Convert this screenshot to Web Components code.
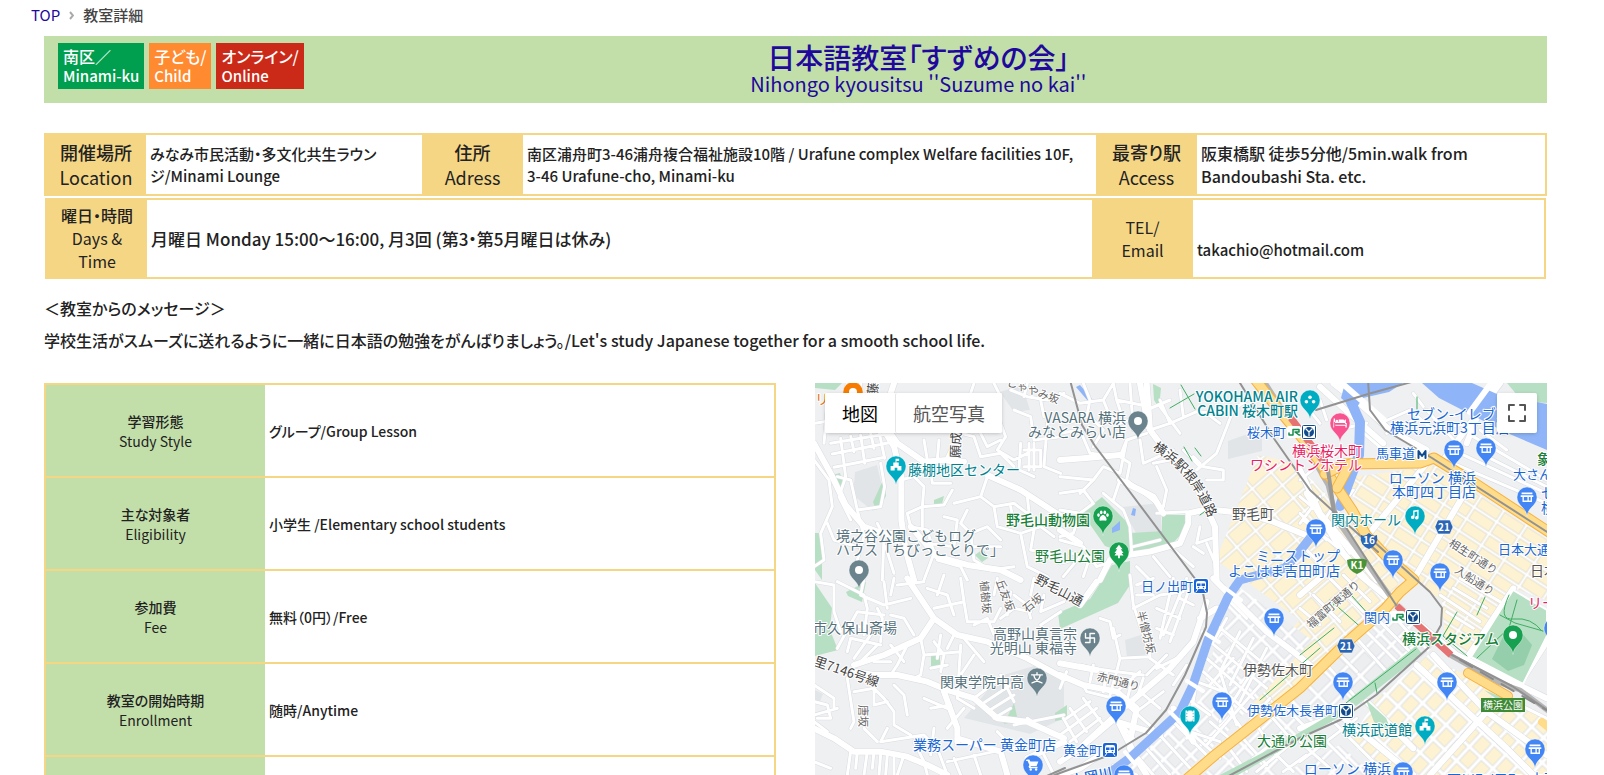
<!DOCTYPE html>
<html lang="ja">
<head>
<meta charset="utf-8">
<meta name="viewport" content="width=device-width, initial-scale=1">
<title>教室詳細</title>
<style>
  body { margin: 0; background: #fff; color: #222; font: 500 16px/22px "Noto Sans CJK JP", sans-serif; font-feature-settings: "palt"; }
</style>
</head>
<body>
<class-page></class-page>
<script>
const define = (name, html, setup) => customElements.define(name, class extends HTMLElement {
  connectedCallback() {
    if (this.shadowRoot) return;
    const t = document.createElement('template');
    t.innerHTML = html;
    this.attachShadow({ mode: 'open' }).append(t.content.cloneNode(true));
    if (setup) setup(this, this.shadowRoot);
  }
});

define('bread-crumb', `
<style>
  :host { display: block; padding: 4px 31px 10px; }
  nav { display: flex; align-items: center; gap: 9px; font-size: 15px; line-height: 22px; color: #444; }
  a { color: #20089c; text-decoration: none; font-weight: 400; }
  svg { width: 5px; height: 9px; fill: none; stroke: #aaa; stroke-width: 2; }
</style>
<nav aria-label="breadcrumb"><a href="#top">TOP</a><svg viewBox="0 0 5 9"><path d="M1 1l3 3.500-3 3.500"/></svg><span>教室詳細</span></nav>`);

define('tag-chip', `
<style>
  :host { display: block; padding: 3px 5px; background: var(--tag); color: #fff; font-size: 16px; line-height: 20px; white-space: nowrap; }
  div + div { font-size: 15px; }
</style>
<div><slot></slot></div><div><slot name="en"></slot></div>`);

define('class-banner', `
<style>
  :host { display: flex; background: #c2dfaa; padding: 7px 14px; align-items: flex-start; }
  .tags { display: flex; gap: 5px; }
  h1 { flex: 1; margin: 0; text-align: center; font-size: 28px; line-height: 28px; font-weight: 500; }
  h1 a { color: #20089c; text-decoration: none; }
  small { display: block; font-size: 20px; line-height: 25px; font-weight: 400; }
</style>
<div class="tags"><slot name="tags"></slot></div>
<h1><a href="#class"><slot></slot><small><slot name="sub"></slot></small></a></h1>`);

const infoStyle = `
  table { width: 100%; border-collapse: collapse; table-layout: fixed; border: 2px solid #f5d685; }
  th { background: #f5d685; font-weight: 500; padding: 0; text-align: center; vertical-align: middle; }
  th span { font-weight: 400; }
  td { padding: 0 4px; vertical-align: middle; font-size: 15px; }`;

define('place-table', `
<style>${infoStyle}
  :host { display: block; }
  tr { height: 61px; }
  th { font-size: 18px; line-height: 25px; }
  .wide { font-size: 16px; line-height: 23px; }
  .k { width: 101px; } .a { width: 276px; } .b { width: 573px; }
</style>
<table><colgroup><col class="k"><col class="a"><col class="k"><col class="b"><col class="k"><col></colgroup>
<tr><th scope="row">開催場所<br><span>Location</span></th><td>みなみ市民活動・多文化共生ラウン<br>ジ/Minami Lounge</td>
<th scope="row">住所<br><span>Adress</span></th><td>南区浦舟町3-46浦舟複合福祉施設10階 / Urafune complex Welfare facilities 10F,<br>3-46 Urafune-cho, Minami-ku</td>
<th scope="row">最寄り駅<br><span>Access</span></th><td class="wide">阪東橋駅 徒歩5分他/5min.walk from<br>Bandoubashi Sta. etc.</td></tr></table>`);

define('time-table', `
<style>${infoStyle}
  :host { display: block; margin: 2px 1px 0; }
  tr { height: 79px; }
  th { font-size: 16px; line-height: 23px; }
  .when { font-size: 17px; }
  .k { width: 101px; } .b { width: 945px; }
</style>
<table><colgroup><col class="k"><col class="b"><col class="k"><col></colgroup>
<tr><th scope="row">曜日・時間<br><span>Days &amp;<br>Time</span></th><td class="when">月曜日 Monday 15:00〜16:00, 月3回 (第3・第5月曜日は休み)</td>
<th scope="row"><span>TEL/<br>Email</span></th><td><br>takachio@hotmail.com</td></tr></table>`);

define('class-message', `
<style>:host { display: block; padding: 13px 0 27px; } p { margin: 0; line-height: 32px; font-size: 16px; } p:first-child { line-height: 22px; padding-bottom: 5px; }</style>
<p>＜教室からのメッセージ＞</p><p><slot></slot></p>`);

define('detail-table', `
<style>
  :host { display: block; }
  table { width: 100%; border-collapse: collapse; table-layout: fixed; border: 2px solid #f5d685; font-size: 14px; line-height: 20px; }
  tr { height: 93px; border-bottom: 2px solid #f5d685; }
  th { background: #c2dfaa; width: 30%; font-weight: 500; padding: 0; }
  th span { font-weight: 400; }
  td { padding: 0 4px; }
</style>
<table>
<tr><th scope="row">学習形態<br><span>Study Style</span></th><td>グループ/Group Lesson</td></tr>
<tr><th scope="row">主な対象者<br><span>Eligibility</span></th><td>小学生 /Elementary school students</td></tr>
<tr><th scope="row">参加費<br><span>Fee</span></th><td>無料（0円）/Free</td></tr>
<tr><th scope="row">教室の開始時期<br><span>Enrollment</span></th><td>随時/Anytime</td></tr>
<tr><th scope="row"></th><td></td></tr>
</table>`);

/* ---- map data. Street tiles: [dx, dy, minor streets, wide streets], three units to a pixel ---- */
const tiles = [
[814, 380,
 `M30 190L40 80M0 130L30 125 90 100M50 190L230 160M55 222L225 188M60 262L212 232M80 175L95 290M110 168L120 215M140 165L152 250M170 160L180 205M195 155L212 235M95 290L75 350 110 420M0 240L45 300 55 380 20 460 30 540 0 560M70 290L110 300 130 390 200 380 212 320 200 250M130 390L150 470 130 540M190 430L210 470 205 600M260 300L300 290 330 320 325 380M325 380L280 400 290 440M325 450L325 380 390 375 415 330M350 270L355 310 410 310M375 180L370 240 420 250M330 180L340 240M440 160L480 170 500 230 560 220 600 260M500 160L520 200 560 180M560 130L575 170 550 210 600 240 640 220M620 190L615 270 660 290M630 210H680V260H630M645 190V270M660 190V270M700 130L690 260 740 280M600 90L650 110 660 180 740 170M590 30L640 50 700 60 750 40M640 10L630 50M680 60L690 110M520 290L500 350 420 370M500 350L540 380 600 370 640 400M460 390L440 430 470 460 520 440 560 480M540 380L550 440 620 460 680 440 720 470M590 380L600 430M640 350L650 440M470 460L480 540 530 570 600 560M480 500L560 500M620 460L640 560 700 590M660 450L650 510 750 530M290 440L340 450 360 520M340 490L420 500 430 420 390 410M360 520L330 600M40 430L60 480 130 500M200 460L260 455M215 500L240 580M370 540L440 560 460 600M100 10L90 40M140 10V40M480 10L470 40M540 10L555 40`,
 `M0 190L55 290 95 375 150 440 230 470M210 150L240 200 262 290 262 420 275 510 300 600M222 150L250 190 330 245 400 240 450 245M400 240L440 160 450 120M520 285L620 330 720 395 750 415M290 440L370 530 460 555 560 570 620 600M240 10L230 40`],
[1060, 380,
 `M0 40L60 70 130 60 160 10M70 10L90 60 80 110 20 130M130 60L150 110 180 130 240 110M0 160L60 150 90 220 180 230 200 180 260 160M90 110L130 150 100 200M200 180L180 280 130 260 100 300 0 290M180 230L210 250 200 300 290 370M160 10L170 60 270 80M170 60L190 120M210 10L220 150M240 20L260 90 330 60M270 150L330 130 410 95 480 100M300 80L360 160M330 130L300 60M360 30L370 110M240 180L250 250 340 210M280 250L330 240M290 260L320 330 310 380 300 400M370 210L420 260M410 270L470 220 520 90 560 60M440 100L480 130M400 230L420 250M430 260L490 270 490 300 440 300M0 340L70 330 100 370 60 400 0 390M100 300L60 340M60 400L40 460 0 470M130 340L190 390 210 440 215 520M180 300L160 360M290 400L380 395M220 500L300 480M0 480L70 500 110 560M30 520L90 530 70 590M110 560L200 530M420 440L410 490 470 470M440 490L470 560M400 500L430 520M230 560L270 600M280 530L330 590M330 500L400 560M0 550L40 540M10 590L60 530`,
 `M260 10L270 150 300 190 360 260 410 320 440 385M240 10L265 140M0 240L70 235 180 225M440 385L465 440 470 600M205 525L270 515 360 490 385 430 385 400 440 388 560 400M560 400L640 425 760 475M120 600L150 540 205 525M0 450L60 490M180 300L280 350 310 400`],
[814, 575,
 `M0 20L60 30 60 110 80 170M70 20L150 60 160 100M150 10L140 60 210 90 290 70M210 20L220 100M240 10L230 60M190 100L205 130 200 200M160 100L150 180M100 230L110 190 200 210M120 250L170 180M140 260L190 210M70 220L130 110 210 120M110 150L160 160M230 120L270 130 300 180M320 190L330 240 320 300 300 310M330 240L440 230M350 280L400 270M360 200L390 240 380 290M380 180L370 250M440 210L430 370M480 240L440 300M450 190L510 260M400 220L420 180M230 210L270 260M280 210L250 270 230 300M180 260L230 260M0 330L60 370 60 400M0 380L40 390 50 430 10 430M0 420L70 400M100 310L120 440 110 460M120 350L180 340 210 370 240 410 240 450 290 480M180 340L180 390 220 380M240 330L270 360 280 420M330 370L400 400M350 400L410 390M200 500L220 460M150 460L190 500M200 500L330 480 370 520M0 440L40 470M20 470L80 500M0 560L50 580M110 530L100 600M130 530L125 580M160 530L150 600M180 530L175 580M200 540L195 600M220 540L215 600M240 550L240 600M270 540L250 600M300 500L330 560 340 600M360 460L350 540M370 520L400 600M400 560L540 530M420 550L440 600M480 540L500 600M250 30L330 20M340 40L400 60 420 120M360 100L450 80 440 10M370 60L390 0M450 80L460 140 540 140 560 100M480 150L520 130 540 180M540 60L550 10M560 130L600 100 650 110M600 60L640 90 650 130M590 50L580 120M660 10L650 60M690 60L680 110 750 80M680 150L740 110M430 370L480 400M480 370L560 310M500 390L590 330M520 410L600 360M540 430L590 400M560 300L600 380M450 400L400 460M640 430L700 470M600 450L750 420M550 470L600 520M690 540L720 600`,
 `M280 10L360 130 430 180 520 200 640 250 750 310M360 130L320 190 210 240 120 270M120 290L180 300 250 300 340 320 400 345 480 370 550 430 640 440 750 490M390 350L430 460 430 500M0 460L60 490 120 530 200 530 280 545 340 570 400 600M430 490L560 530 580 600M640 550L750 500`],
[1060, 575,
 `M210 0L220 90 250 180 270 240M120 130L150 140 160 190 180 180M160 160L180 250 170 290M180 250L270 245M300 60L370 50M340 10L300 190M380 10L310 180M400 10L330 200M290 100L360 130M290 160L340 180M360 70L400 90M220 100L300 60M230 60L280 60M230 30L280 10M100 270L90 320M60 270L100 280 170 290 250 300M140 290L130 350M170 290L150 360M220 300L200 380M250 310L230 370M270 250L340 300M290 280L350 250M20 290L0 340M70 330L80 350 160 370 220 400M20 430L90 380M0 480L110 400M30 500L120 430M30 400L80 470M70 370L130 450M10 430L50 500M90 500L160 440M240 350L300 400M200 390L280 460M180 440L220 490M230 410L310 350M170 350L240 290M160 570L230 600M320 240L260 300M380 270L340 330M410 320L490 350M380 370L450 420M330 430L450 550M290 470L400 590M250 510L330 600M220 530L280 600M390 470L480 500M410 320L380 490M470 150L640 290M450 200L620 340M440 250L580 370M430 290L560 410M480 290L530 450M500 130L460 200M540 170L480 290M580 190L510 330M620 220L540 380M510 80L560 130M450 330L520 250M570 300L480 440M600 330L440 510M630 370L560 450M500 400L560 480M450 440L520 500M400 480L480 550M500 510L560 590M540 480L620 570M590 450L650 540M630 420L700 500M670 390L740 460M530 590L630 510M590 590L700 500M670 590L740 540M620 510L700 590`,
 `M0 300L70 330 170 350 230 400 210 500M110 20L60 90M460 10L520 70 620 170 700 230 750 270M400 200L330 280 190 400 60 520 0 560M440 80L400 200M470 100L420 130M0 265L110 285M170 440L300 480M180 450L215 520M340 400L400 500M210 520L260 600M0 600L60 580 150 520`],
[1300, 380,
 `M60 60L80 120M20 80L60 130M110 150L200 130M180 150L250 210M240 130L330 90 400 150M260 160L340 120M380 90L480 200M340 40L370 80M440 140L520 130M540 150L620 210M460 250L740 370M480 220L740 340M520 170L740 300M560 230L740 320M0 350L60 400 150 520M0 400L80 480M0 300L50 260M160 330L110 400M10 420L110 500M10 500L70 560M60 350L0 430M100 380L20 500`,
 `M100 10L190 80 270 150 380 210M60 20L170 120 250 190M600 10L430 240M540 90L500 190M0 270L60 400 230 600M20 340L130 520 200 600M500 330L340 600M380 250L200 470M590 10L560 60`],
[1300, 575,
 `M0 100L60 150M40 60L120 140M90 10L190 110M130 0L210 80M240 140L340 240M170 190L260 290M200 170L300 270M270 110L350 200M120 240L170 290M80 270L180 380M0 330L40 300M440 110L520 160M420 60L540 140M460 40L560 100M480 10L600 80M0 500L90 580M100 440L220 560M60 480L160 580M170 430L0 560M660 390L740 430`,
 `M0 60L70 0M180 0L290 90 470 240 740 370M640 40L500 250M740 200L650 340M350 270L620 520 700 600M400 240L560 410 740 540M560 410L390 600M0 460L120 420 340 600M200 380L340 520`]
];

const pins = [
 ['teal','museum',896,484],['grey','dot',859,588],['grey','dot',1138,439],['teal','dots',1310,418],['pink','bed',1340,441],
 ['green','paw',1103,534],['green','tree',1119,570],['blue','shop',1454,468],['blue','shop',1486,466],['blue','shop',1527,515],
 ['blue','shop',1316,547],['blue','shop',1393,578],['blue','shop',1440,591],['teal','note',1415,534],['blue','shop',1274,636],
 ['blue','shop',1116,724],['blue','shop',1222,720],['teal','film',1190,734],['grey','manji',1090,656],['grey','school',1037,696],
 ['blue','cart',1033,783],['blue','shop',1343,700],['blue','shop',1447,700],['teal','museum',1425,744],['blue','shop',1535,767],
 ['blue','shop',1403,790],['green','dot',1513,653],['blue','shop',1124,793],['blue','shop',1554,646],['orange','dot',853,410]
];
const glyphs = {
 dot: '<circle r="4"/>',
 shop: '<path d="M-6-5h12v2h-12zM-7-2h14v2h-14zM-5 0h1.500v4h4v-4h1.500v4h2v-4h1.500v5.500h-10.500z"/>',
 museum: '<path d="M-.5-8h4v2.500h-3v1.500h-1zM-3-4h6v3h-6zM-6 0h3v-1h6v1h3v5h-4.500v-3h-3v3h-4.500z"/>',
 dots: '<circle cy="-3" r="2"/><circle cx="-4" cy="2" r="2"/><circle cx="4" cy="2" r="2"/>',
 bed: '<path d="M-7-5h1.500v5h11v-2c0-1-1-2-2-2h-5v3h-5v6h-1zM-5.500 2h12v-2h1v5h-1.500v-2h-11zM5.500-4h1v5h-1z"/><circle cx="-3.500" cy="-2" r="1.500"/>',
 paw: '<ellipse cx="-5" cy="-1" rx="1.500" ry="2"/><ellipse cx="-2" cy="-4" rx="1.500" ry="2"/><ellipse cx="2" cy="-4" rx="1.500" ry="2"/><ellipse cx="5" cy="-1" rx="1.500" ry="2"/><path d="M0-1c2 0 4 3 4 5s-2 1-4 1-4 1-4-1 2-5 4-5z"/>',
 tree: '<path d="M0-8l4 5h-2l3 4h-2l2 3h-4v3h-2v-3h-4l2-3h-2l3-4h-2z"/>',
 note: '<path d="M-2-6l6-1v9a2 2 0 1 1-1.500-2v-5l-3 .5v6a2 2 0 1 1-1.500-2z"/>',
 film: '<path d="M-5-6h2v1h1v-1h4v1h1v-1h2v12h-2v-1h-1v1h-4v-1h-1v1h-2zM-4-3v1h1v-1zM-4 0v1h1v-1zM-4 3v1h1v-1zM3-3v1h1v-1zM3 0v1h1v-1zM3 3v1h1v-1z" fill-rule="evenodd"/>',
 manji: '<path d="M-5-5v5h10v5M0-5v10M0-5h5M-5 5h5" fill="none" stroke="#fff" stroke-width="1.500"/>',
 school: '<path d="M0-6v2M-6-3.500h12M-3.500-3q1 6 9 8.500M3.500-3q-1 6-9 8.500" fill="none" stroke="#fff" stroke-width="1.500"/>',
 cart: '<path d="M-7-6h3l1 2h9l-2 5h-6l-1 1h8v1.500h-9l-1-1.500 1-2-2-4.500h-2z"/><circle cx="-2.500" cy="5" r="1.300"/><circle cx="3.500" cy="5" r="1.300"/>'
};
const pinColor = { teal: '#00acc1', grey: '#6b838d', pink: '#f8538f', green: '#16a04f', blue: '#4285f4', orange: '#f57c00' };

/* [text, x, baseline, colour class, anchor?, rotation?] */
const labels = [
 ['藤棚地区センター',908,475,'t'],['境之谷公園こどもログ',836,541,'s'],['ハウス「ちびっことりで」',836,555,'s'],
 ['VASARA 横浜',1126,423,'s','end'],['みなとみらい店',1126,437,'s','end'],
 ['YOKOHAMA AIR',1298,402,'t m','end'],['CABIN 桜木町駅',1298,416,'t m','end'],
 ['桜木町',1247,437,'b st'],['横浜桜木町',1362,456,'p','end'],['ワシントンホテル',1362,470,'p','end'],
 ['セブン-イレブン',1407,419,'b'],['横浜元浜町3丁目店',1390,433,'b'],['馬車道',1376,458,'b st'],
 ['ローソン 横浜',1476,483,'b','end'],['本町四丁目店',1476,497,'b','end'],['象',1537,464,'g m'],['大さん',1513,479,'b st'],
 ['セ',1541,498,'b'],['横',1541,513,'b'],['関内ホール',1401,525,'t','end'],['日本大通',1498,554,'b st'],['日本',1530,576,'k'],
 ['ミニストップ',1340,561,'b','end'],['よこはま吉田町店',1340,576,'b','end'],['野毛町',1232,519,'k'],
 ['野毛山動物園',1090,525,'g m','end'],['野毛山公園',1105,561,'g','end'],['日ノ出町',1141,591,'b st'],
 ['市久保山斎場',813,633,'s'],['関東学院中高',940,687,'s'],['高野山真言宗',1077,639,'s','end'],['光明山 東福寺',1077,653,'s','end'],
 ['業務スーパー 黄金町店',1056,750,'b','end'],['黄金町',1063,755,'b st'],['伊勢佐木町',1243,675,'k'],['伊勢佐木長者町',1247,715,'b st'],
 ['大通り公園',1257,746,'g'],['横浜武道館',1412,735,'t','end'],['横浜スタジアム',1499,644,'g m','end'],['関内',1364,622,'b st'],
 ['リー',1528,608,'p'],['ローソン 横浜',1391,774,'b','end'],['石川町(元町',1447,785,'b'],['中華',1530,784,'b'],
 ['リ',815,404,'o'],
 ['相生町通り',1448,545,'r','start',33],['入船通り',1454,572,'r','start',33],['福富町東通り',1311,629,'r','start',-41],
 ['野毛山通',1034,582,'r w','start',28],['里7146号線',813,665,'r w','start',19],['赤門通り',1096,680,'r','start',14],
 ['石坂',1027,613,'r','start',-40],['丘友坂',996,581,'r','start',70],['植樹坂',980,581,'r','start',85],['半僧坊坂',1137,612,'r','start',76],
 ['唐坂',859,705,'r','start',90],['願成',960,458,'r w','start',-88],['藤',877,396,'r w','start',-85],['じゃやみ坂',1006,385,'r','start',20],
 ['大岡川',1072,786,'b m','start',-12]
];

const esc = s => s.replace(/&/g, '&amp;');
const streets = () => {
  const g = i => tiles.map(t => `<path transform="translate(${t[0]} ${t[1]}) scale(.3333)" d="${t[i]}"/>`).join('');
  return `<g class="c1">${g(2)}</g><g class="c2">${g(3)}</g><g class="f1">${g(2)}</g><g class="f2">${g(3)}</g>`;
};
const metro = (x, y) => `<g transform="translate(${x} ${y})"><rect x="-8" y="-8" width="16" height="16" rx="2" fill="#fff"/><rect x="-6.500" y="-6.500" width="13" height="13" rx="1" fill="#fff" stroke="#124b8c"/><circle r="5" fill="#124b8c"/><path d="M0 4v-4l-3-3M0 0l3-3" stroke="#fff" stroke-width="1.200" fill="none"/></g>`;
const train = (x, y) => `<g transform="translate(${x} ${y})"><rect x="-8" y="-8" width="16" height="16" rx="3" fill="#fff"/><rect x="-7" y="-7" width="14" height="14" rx="2" fill="#1a66d8"/><path d="M-3-5h6a2 2 0 0 1 2 2v6h-10v-6a2 2 0 0 1 2-2z" fill="#fff"/><path d="M-4-2.500h3.500v2.500h-3.500zM.5-2.500h3.500v2.500h-3.500z" fill="#1a66d8"/><path d="M-3 3l-2 3M3 3l2 3" stroke="#fff"/><circle cx="-2.500" cy="1.500" r=".8" fill="#1a66d8"/><circle cx="2.500" cy="1.500" r=".8" fill="#1a66d8"/></g>`;
const jr = (x, y) => `<g transform="translate(${x} ${y})"><rect x="-7" y="-6" width="14" height="12" rx="2" fill="#fff"/><path d="M-5 1v2h4v-5.500h6v2.500h-4l4 3h1" fill="none" stroke="#178a4e" stroke-width="1.500"/></g>`;
const shield = (x, y, n) => `<path transform="translate(${x} ${y})" d="M-6-7h12l3 7-3 7h-12l-3-7z" fill="#2b65b5" stroke="#fff" stroke-width=".6"/><text class="n" x="${x}" y="${y + 4}">${n}</text>`;

define('street-map', `
<style>
  :host { display: block; position: relative; height: 466px; overflow: hidden; background: #eff0f2; }
  .canvas { display: block; width: 100%; height: 100%; }
  path { stroke-linejoin: round; stroke-linecap: round; }
  .c1, .c2, .f1, .f2 { fill: none; }
  .c1 { stroke: #d9dce1; stroke-width: 12; } .c2 { stroke: #d9dce1; stroke-width: 21; }
  .f1 { stroke: #fff; stroke-width: 9; } .f2 { stroke: #fff; stroke-width: 18; }
  .rail { fill: none; stroke: #929292; stroke-width: 2; }
  .hw1 { fill: none; stroke: #f8b13c; stroke-width: 11; } .hw2 { fill: none; stroke: #fedc8a; stroke-width: 9; }
  .mid { fill: none; stroke: #8a8a8a; stroke-width: 2; }
  text { font-size: 14px; font-weight: 400; paint-order: stroke; stroke: #fff; stroke-width: 2; stroke-linejoin: round; font-feature-settings: normal; }
  .t { fill: #00838f; } .s { fill: #55717c; } .b { fill: #1967d2; } .p { fill: #e91e63; } .g { fill: #188038; } .k { fill: #555; } .o { fill: #e8710a; }
  .m { font-weight: 500; } .st { font-size: 13px; } .r { fill: #666; font-size: 11px; } .r.w { font-size: 13px; fill: #444; }
  .n { fill: #fff; stroke: none; font-size: 10px; font-weight: 700; text-anchor: middle; }
  .types { position: absolute; left: 10px; top: 10px; display: flex; box-shadow: 0 1px 4px -1px rgba(0,0,0,.3); border-radius: 2px; background: #fff; }
  button { border: 0; margin: 0; background: #fff; height: 40px; padding: 0 17px; font: 400 18px/40px "Noto Sans CJK JP", sans-serif; font-feature-settings: normal; color: #565656; border-radius: 2px; }
  button.on { color: #000; }
  .types button + button { border-left: 1px solid #e6e6e6; }
  .full { position: absolute; right: 10px; top: 10px; width: 40px; padding: 11px; box-shadow: 0 1px 4px -1px rgba(0,0,0,.3); }
  .full svg { display: block; width: 18px; height: 18px; }
</style>
<svg class="canvas" viewBox="0 0 732 466" preserveAspectRatio="xMinYMin slice" role="img" aria-label="地図"></svg>
<div class="types"><button class="on" type="button">地図</button><button type="button">航空写真</button></div>
<button class="full" type="button" aria-label="全画面表示"><svg viewBox="0 0 18 18" fill="none" stroke="#555" stroke-width="2"><path d="M1 6v-5h5M12 1h5v5M17 12v5h-5M6 17h-5v-5"/></svg></button>`,
(host, root) => {
  const A = (cls, d) => `<path class="${cls}" d="${d}"/>`;
  const hw = d => A('hw1', d) + A('hw2', d);
  const yellowRoad1 = 'M1254 378L1275 405 1308 445 1328 474 1352 510 1366 535 1385 555 1414 580 1400 592 1385 609 1345 644 1300 688 1215 755 1180 785';
  const yellowRoad2 = 'M1325 474L1345 464 1420 463 1434 458 1470 480 1555 536';
  const river = 'M1314 533L1296 556 1285 568 1240 580 1228 597 1208 640 1193 685 1180 712 1155 735 1130 758 1100 780';
  root.querySelector('.canvas').innerHTML = `
  <defs>
    <pattern id="gy" width="17" height="25" patternUnits="userSpaceOnUse" patternTransform="rotate(49)"><rect width="17" height="25" fill="#fff"/><rect x="2" y="2" width="14" height="22" fill="#fdf2d2" stroke="#dcdad2" stroke-width=".8"/></pattern>
    <pattern id="gg" width="16" height="22" patternUnits="userSpaceOnUse" patternTransform="rotate(45)"><rect width="16" height="22" fill="#fff"/><rect x="2" y="2" width="12" height="18" fill="#eceef0" stroke="#d9dce1" stroke-width=".8"/></pattern>
    <pattern id="gk" width="27" height="14" patternUnits="userSpaceOnUse" patternTransform="rotate(33)"><rect width="27" height="14" fill="#fff"/><rect x="2" y="2" width="24" height="11" fill="#fdf2d2" stroke="#dcdad2" stroke-width=".8"/></pattern>
    <pattern id="gs" width="16" height="19" patternUnits="userSpaceOnUse" patternTransform="rotate(43)"><rect width="16" height="19" fill="#fff"/><rect x="2" y="2" width="12" height="15" fill="#fdf2d2" stroke="#d9dce1" stroke-width=".8"/></pattern>
  </defs>
  <g transform="translate(-815 -383)">
  <g fill="#e2e5e8"><path d="M855 472l22-7 8 34-12 12-20-16zM1000 392l22-7 8 25-16 2zM1228 441l34-12v22l-34 8zM1122 507l38-4 2 28-26 2zM1000 676l34-10 30 10v42l-34 16-66-16zM815 690l8 4-4 10h-4zM1125 640l25-8 2 24-25 2z"/></g>
  <g fill="#b7dfc3"><path d="M1082 513l20-16 26 26 3 32-26-9zM1162 515h25l1 12-15 16-41 10-2-20 32-2zM1112 565l18-4v24l-12 18-58 26-2-16 32-14zM815 583l17 25-2 22 8 20-23 6zM815 533h7v47l-7-10zM815 383h27l-7 7-20-2zM832 475l8-2 4 14-9 2zM884 478l2 18-10 14-3-8zM934 500l10-4-2 8-8 1zM975 555l8-6 5 9-6 4zM846 592l20-10-4 20-14-6zM931 656h9v11h-9zM1014 703l4 18-14 3zM1055 713l12-8v14l-12 2zM1153 384l8 4-2 20-5-8z"/></g>
  <path fill="url(#gy)" d="M1216 560L1258 455 1290 462 1318 485 1400 578 1392 600 1320 665 1255 722 1228 695 1300 620 1236 574z"/>
  <path fill="url(#gg)" d="M1232 582L1312 640 1215 745 1180 775 1120 775 1200 700z"/>
  <path fill="url(#gg)" d="M1340 650L1395 610 1440 640 1425 655 1240 770 1220 755z"/>
  <path fill="url(#gk)" d="M1346 478L1435 466 1547 538V600L1513 588 1470 655 1445 640 1442 600 1405 575 1362 520z"/>
  <path fill="url(#gs)" d="M1375 700L1428 655 1547 720V850H1460L1350 742z"/>
  <path fill="url(#gg)" d="M1340 745L1280 775 1310 850H1460zM1200 775L1260 745 1300 775 1270 850H1180z"/>
  <path fill="#8fb5f8" d="M1080 385l12 14-4 2-12-14zM1133 508l3 1-1 7-4-1zM1112 528l8-7v9l-8 3z"/>
  <path fill="#b7dfc3" d="M1507 383h40v20l-25-2z"/>
  ${streets()}
  <path fill="#8fb5f8" d="M1345 383h58l-14 9-26 6-8 12-14-12zM1422 383h50l25 11 50 10v46l-42-18-66-34z"/>
  <path d="M1350 400L1360 422 1359 455 1340 506" fill="none" stroke="#8fb5f8" stroke-width="10"/>
  <path d="M1336 378L1384 420M1495 378L1470 412" stroke="#fff" stroke-width="6"/>
  <path d="${river}" fill="none" stroke="#8fb5f8" stroke-width="9" style="stroke-linecap:butt"/>
  <path d="M1203 632l16 10M1187 681l16 10M1170 712l12 12M1125 752l10 12M1225 588l16 12" stroke="#fff" stroke-width="4"/>
  <path fill="#b7dfc3" stroke="#fff" stroke-width="2" d="M1513 590l34 20v26l-24 48-52-27z"/><path fill="#94ceaa" d="M1504 635l18-2 10 12-8 20-16 6-16-12z"/>
  <path fill="#b7dfc3" d="M1416 646l6 8-66 52-8-6zM1366 700l20 18 6 14-18-10zM1345 706l-60 35-65 34 4 8 70-40 56-32zM1484 690l40 16-12 4z"/>
  <path fill="none" stroke="#3fae63" d="M1509 595q-12 26 5 24t28 12M1517 600l-8 28-32 30M1500 615l15 8 28 8M1416 649l-70 54M1375 683l2 10M1330 600l34 30M1345 590l-28 36M1300 655l34-27M1352 596l18 20M1260 700l60-52M1170 408l24-14M1181 385l14 24M1184 447l8 14M1195 448l6 8M1417 397v12M1485 597l-8 18M1200 515l8-6M1457 612l-14 24 24 20"/>
  <path d="M1262 378L1275 398 1305 445 1328 485 1337 520 1380 582 1400 610 1450 655 1500 683 1520 690 1555 716" fill="none" stroke="#b5b5b5" stroke-width="5"/>
  ${hw(yellowRoad1)}${hw(yellowRoad2)}${hw('M1337 488L1350 464')}
  <path d="M1468 673L1508 696" stroke="#f8b13c" stroke-width="10"/><path d="M1468 673L1508 696M1542 722l12 10" stroke="#fedc8a" stroke-width="8"/>
  <path d="M1291 418L1324 462M1397 606L1451 655" stroke="#e57373" stroke-width="7" style="stroke-linecap:butt"/>
  <path d="M1328 470L1334 512" stroke="#9a9a9a" stroke-width="4"/>
  <path class="rail" d="M1070 380L1082 425 1095 446 1130 492 1196 580 1203 593 1207 613 1206 627 1185 675 1166 710 1146 733 1110 755 1060 773 1030 785"/>
  <path class="rail" d="M1368 380L1370 410 1385 430 1432 458 1555 537M1316 410L1368 394 1415 381M1240 383L1275 440 1310 490 1345 522 1378 552M1372 540L1400 565 1430 592 1442 608 1441 625 1428 648 1376 695 1340 720 1300 738 1225 778M1336 512L1396 605M1452 655L1512 686 1550 712M1015 790L1065 768"/>
  <path class="mid" stroke-dasharray="14 10" d="M1460 660L1550 712"/>
  <defs><path id="curve" d="M1152 449Q1193 473 1211 524"/></defs>
  <text class="r w"><textPath href="#curve">横浜駅根岸道路</textPath></text>
  ${labels.map(([t, x, y, c, a = 'start', r]) => `<text class="${c}" x="${x}" y="${y}" text-anchor="${a}"${r ? ` transform="rotate(${r} ${x} ${y})"` : ''}>${esc(t)}</text>`).join('')}
  ${shield(1444, 527, '21')}${shield(1346, 646, '21')}
  <path d="M1361 535q4 2 8-2 4 4 8 2 2 10-8 14-10-4-8-14z" fill="#2b65b5"/><text class="n" x="1369" y="544">16</text>
  <path d="M1347 560q5-2 10-1 5-1 10 1 0 10-10 14-10-4-10-14z" fill="#4b9337"/><text class="n" x="1357" y="569">K1</text>
  <rect x="1481" y="698" width="44" height="14" fill="#3f8a35"/><text class="n" x="1503" y="709" style="font-weight:400">横浜公園</text>
  ${metro(1309, 432)}${metro(1413, 617)}${metro(1346, 711)}${train(1201, 586)}${train(1110, 750)}${jr(1294, 432)}${jr(1398, 617)}
  <g transform="translate(1422 454)"><rect x="-6" y="-6" width="12" height="12" rx="2" fill="#fff"/><path d="M-3.500 4v-7l3.500 5 3.500-5v7" fill="none" stroke="#124b8c" stroke-width="2"/></g>
  ${pins.map(([c, k, x, y]) => `<g transform="translate(${x} ${y})"><path d="M0 1C-1-8-10-9-10-18A10 10 0 0 1 10-18C10-9 1-8 0 1Z" fill="${pinColor[c]}" stroke="#fff" stroke-width=".4"/><g transform="translate(0 -18)${k === 'dot' ? '' : ' scale(.9)'}" fill="#fff">${glyphs[k]}</g></g>`).join('')}
  </g>`;
});

define('class-page', `
<style>
  :host { display: block; }
  main { padding: 0 57px 0 44px; }
  class-banner { margin-bottom: 30px; }
  .cols { display: grid; grid-template-columns: 1fr 1fr; gap: 39px; }
</style>
<bread-crumb></bread-crumb>
<main>
  <class-banner>
    <tag-chip slot="tags" style="--tag:#009f4f">南区／<span slot="en">Minami-ku</span></tag-chip>
    <tag-chip slot="tags" style="--tag:#ff8a30">子ども/<span slot="en">Child</span></tag-chip>
    <tag-chip slot="tags" style="--tag:#cc2a18">オンライン/<span slot="en">Online</span></tag-chip>
    日本語教室「すずめの会」<span slot="sub">Nihongo kyousitsu ''Suzume no kai''</span>
  </class-banner>
  <place-table></place-table>
  <time-table></time-table>
  <class-message>学校生活がスムーズに送れるように一緒に日本語の勉強をがんばりましょう。/Let's study Japanese together for a smooth school life.</class-message>
  <div class="cols"><detail-table></detail-table><street-map></street-map></div>
</main>`);
</script>
</body>
</html>
